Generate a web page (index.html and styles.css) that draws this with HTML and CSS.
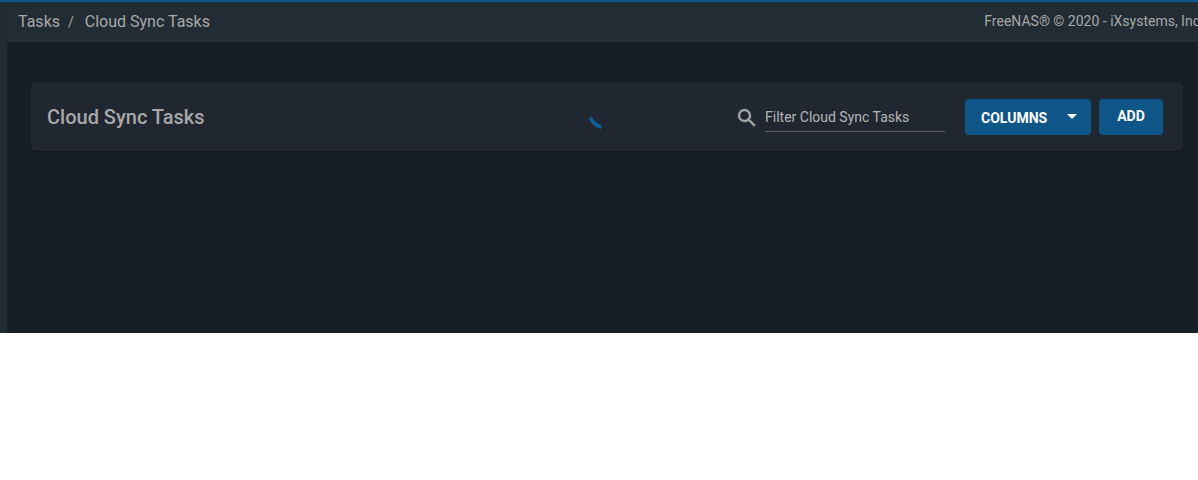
FILE: index.html
```html
<!DOCTYPE html>
<html lang="en">
<head>
<meta charset="utf-8">
<title>Cloud Sync Tasks</title>
<link rel="stylesheet" href="styles.css">
</head>
<body>
<div class="app">
  <aside class="rail"></aside>
  <div class="main">
    <header class="topbar">
      <nav class="crumbs">
        <span>Tasks</span>
        <span class="sep">/</span>
        <span>Cloud Sync Tasks</span>
      </nav>
      <div class="copy">FreeNAS® © 2020 - iXsystems, Inc</div>
    </header>
    <section class="content">
      <div class="panel">
        <h1 class="title">Cloud Sync Tasks</h1>
        <svg class="spinner" width="16" height="16" viewBox="0 0 16 16"><path d="M3.2 2.6C5 6.8 8.6 10.2 14.4 12.4" fill="none" stroke="#0f5f96" stroke-width="3.8"/></svg>
        <div class="search-icon">
          <svg width="24" height="24" viewBox="0 0 24 24"><path fill="#a6a6a6" stroke="#a6a6a6" stroke-width=".4" d="M15.5 14h-.79l-.28-.27A6.47 6.47 0 0 0 16 9.5 6.5 6.5 0 1 0 9.5 16c1.61 0 3.09-.59 4.23-1.57l.27.28v.79l5 4.99L20.49 19l-4.99-5zm-6 0C7.01 14 5 11.99 5 9.5S7.01 5 9.5 5 14 7.01 14 9.5 11.99 14 9.5 14z"/></svg>
        </div>
        <div class="filter">Filter Cloud Sync Tasks</div>
        <button class="btn columns"><span>COLUMNS</span><i class="caret"></i></button>
        <button class="btn add">ADD</button>
      </div>
    </section>
  </div>
</div>
</body>
</html>
```

FILE: styles.css
```css
* { box-sizing: border-box; }
html, body { margin: 0; padding: 0; background: #fff; }
body { font-family: Roboto, sans-serif; }
.app {
  display: flex;
  height: 333px;
  border-top: 2px solid #0d5687;
  background: #171e25;
  overflow: hidden;
}
.rail { width: 7px; flex: none; background: #212b33; }
.main { flex: 1; min-width: 0; display: flex; flex-direction: column; }
.topbar {
  height: 40px;
  flex: none;
  display: flex;
  align-items: center;
  justify-content: space-between;
  padding: 0 0 2px 11px;
  background: #222c34;
  color: #a8a8a8;
  white-space: nowrap;
}
.crumbs { font-size: 16px; display: flex; align-items: center; }
.sep { font-size: 14px; margin: 2px 11px 0 8px; }
.copy { font-size: 14px; margin-right: -2px; }
.content { padding: 40px 15px 0 24px; }
.panel {
  position: relative;
  height: 69px;
  display: flex;
  align-items: center;
  padding: 0 20px 0 16px;
  background: #202731;
  border-radius: 5px;
  box-shadow: 0 1px 2px rgba(0,0,0,.3);
}
.title { margin: 0 auto 0 0; font-size: 20px; font-weight: 500; color: #a8a8a8; line-height: 24px; }
.spinner { position: absolute; left: 556px; top: 33px; }
.search-icon { width: 24px; height: 24px; margin-right: 6px; margin-top: 3px; }
.search-icon svg { display: block; }
.filter {
  width: 180px;
  height: 32px;
  margin: -1px 20px 0 0;
  padding-top: 9px;
  font-size: 14px;
  line-height: 16px;
  color: #b4b4b4;
  border-bottom: 1px solid #5c6268;
}
.btn {
  height: 36px;
  border: 0;
  border-radius: 4px;
  background: #0d5687;
  color: #fff;
  font-family: inherit;
  font-size: 14px;
  font-weight: 700;
  padding: 0;
  margin-top: 1px;
}
.columns { width: 126px; display: flex; align-items: center; padding: 1px 0 0 16px; margin-right: 8px; }
.caret {
  width: 0; height: 0;
  margin: 0 0 2px 20px;
  border-left: 5.5px solid transparent;
  border-right: 5.5px solid transparent;
  border-top: 5px solid #fff;
}
.add { width: 64px; padding-bottom: 2px; }
```
